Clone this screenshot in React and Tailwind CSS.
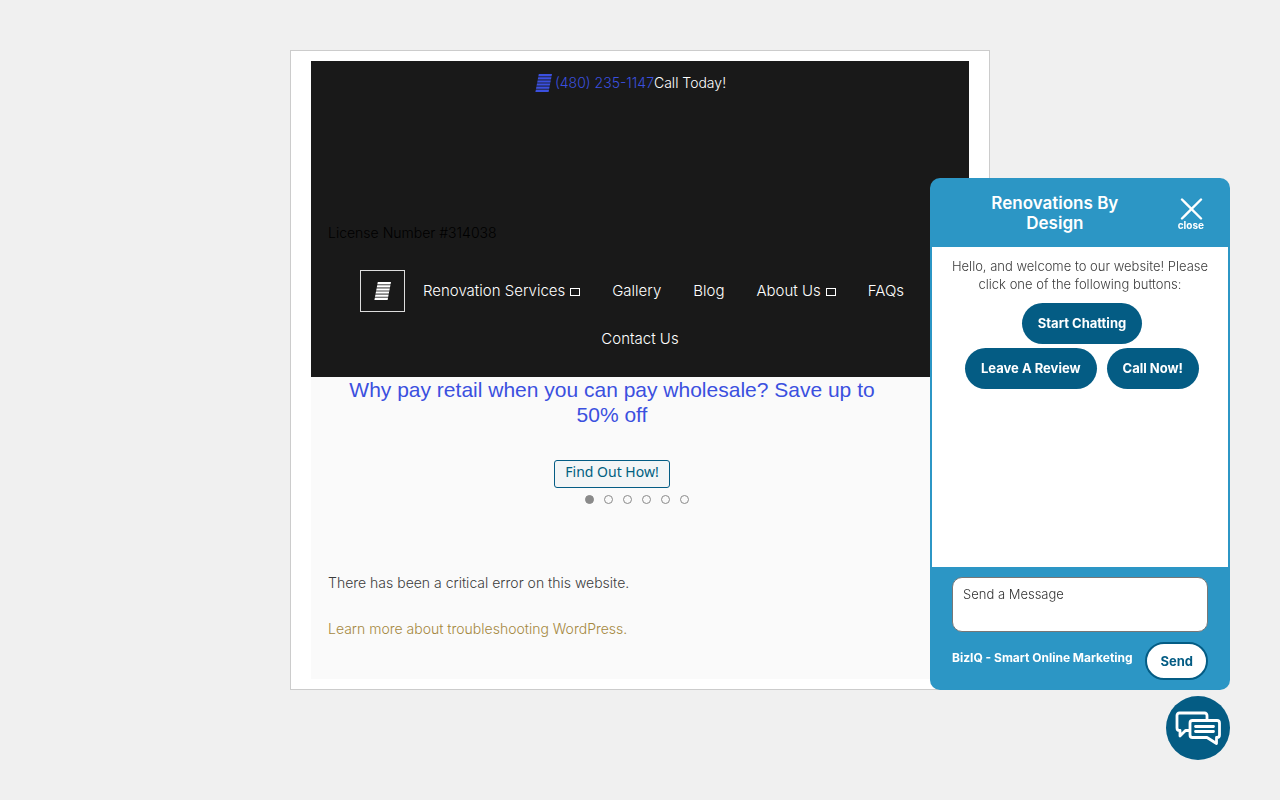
import React, { useState } from "react";

const slides = [0, 1, 2, 3, 4, 5];

const StripeIcon = ({ className }) => (
  <svg className={className} width="17" height="18" viewBox="0 0 17 18" fill="currentColor" aria-hidden="true">
    <path d="M3.8 0H17l-.4 2H3.400zM3.200 3.200h13.200l-.4 2H2.800zM2.600 6.400h13.200l-.4 2H2.200zM2 9.600h13.200l-.4 2H1.600zM1.400 12.800h13.200l-.4 2H1zM.8 16H14l-.4 2H.4z" />
    <path opacity=".4" d="M3.400 2h13.200l-.2 1.200H3.200zM2.800 5.200H16l-.2 1.200H2.600zM2.200 8.400h13.200l-.2 1.200H2zM1.600 11.600h13.200l-.2 1.200H1.400zM1 14.800h13.200L14 16H.8z" />
  </svg>
);

const NavLink = ({ children, hasMenu }) => (
  <a href="#" className="flex h-12 items-center px-4 text-[15px] text-white">
    {children}
    {hasMenu && <span className="ml-[5px] mt-0.5 h-2 w-[10px] border border-white" />}
  </a>
);

const ChatButton = ({ children }) => (
  <button type="button" className="h-[41px] rounded-full bg-[#045c84] px-4 text-[13px] font-bold text-white">
    {children}
  </button>
);

const ChatWidget = ({ onClose }) => {
  const [message, setMessage] = useState("");

  return (
    <section className="fixed right-[50px] bottom-[110px] flex h-[512px] w-[300px] flex-col rounded-[10px] bg-[#2c96c5] px-0.5">
      <header className="flex h-[69px] items-center pr-6">
        <h2 className="flex-1 px-12 text-center text-[17px] leading-5 font-semibold text-white">
          Renovations By Design
        </h2>
        <button type="button" onClick={onClose} className="flex flex-col items-center pt-[3px] text-[10px] leading-[10px] font-bold text-white">
          <svg width="24" height="22" viewBox="0 0 24 22" fill="none" stroke="currentColor" strokeWidth="2.4" strokeLinecap="round" aria-hidden="true">
            <path d="M3 1.500l19 19M22 1.500L3 20.500" />
          </svg>
          close
        </button>
      </header>
      <div className="flex-1 bg-white px-4 pt-[10px] text-center">
        <p className="text-[13px] leading-[18px]">
          Hello, and welcome to our website! Please click one of the following buttons:
        </p>
        <div className="mt-[10px] flex flex-wrap justify-center gap-x-[10px] gap-y-1 pr-2 pl-3">
          <ChatButton>Start Chatting</ChatButton>
          <ChatButton>Leave A Review</ChatButton>
          <ChatButton>Call Now!</ChatButton>
        </div>
      </div>
      <form className="px-5 pt-[10px] pb-[10px]" onSubmit={(e) => e.preventDefault()}>
        <textarea
          aria-label="Send a Message"
          placeholder="Send a Message"
          value={message}
          onChange={(e) => setMessage(e.target.value)}
          className="block h-[55px] w-full resize-none rounded-[10px] border border-[#777] bg-white px-[10px] py-[7px] text-[13px] leading-[18px] text-[#333] placeholder:text-[#333]"
        />
        <div className="mt-[10px] flex items-center justify-between">
          <a href="#" className="mb-[6px] text-[12px] font-bold whitespace-nowrap text-white">
            BizIQ - Smart Online Marketing
          </a>
          <button type="submit" className="h-[38px] rounded-full border-2 border-[#045c84] bg-white px-[13px] text-[13px] font-bold text-[#045c84]">
            Send
          </button>
        </div>
      </form>
    </section>
  );
};

const App = () => {
  const [chatOpen, setChatOpen] = useState(true);
  const [active, setActive] = useState(0);

  return (
    <div className="min-h-screen bg-[#f0f0f0] px-4 py-[50px] font-[Inter,sans-serif] text-sm font-[350] text-[#3c3c3c]">
      <main className="mx-auto max-w-[700px] border border-[#ccc] bg-white px-5 py-[10px]">
        <header className="bg-[#191919] pb-[14px]">
          <p className="flex items-center justify-center pt-3 pr-[19px] text-white">
            <a href="#" className="flex items-center text-[#3b50df]">
              <StripeIcon className="mr-[3px]" />
              (480) 235-1147
            </a>
            Call Today!
          </p>
          <p className="mt-[130px] px-[17px] text-black">License Number #314038</p>
          <nav className="mt-6 flex flex-wrap items-center justify-center px-8">
            <button type="button" aria-label="Menu" className="mr-[2px] flex h-[42px] w-[45px] items-center justify-center border border-[#ddd] text-white">
              <StripeIcon />
            </button>
            <NavLink hasMenu>Renovation Services</NavLink>
            <NavLink>Gallery</NavLink>
            <NavLink>Blog</NavLink>
            <NavLink hasMenu>About Us</NavLink>
            <NavLink>FAQs</NavLink>
            <NavLink>Contact Us</NavLink>
          </nav>
        </header>

        <div className="bg-[#fafafa] pb-10">
          <div className="mr-14 flex flex-col items-center px-8 text-center">
            <h1 className="font-['Liberation_Sans',sans-serif] text-[21px] leading-[25px] font-normal text-[#3b50df]">
              Why pay retail when you can pay wholesale? Save up to 50% off
            </h1>
            <a href="#" className="mt-[33px] h-7 rounded-[3px] border border-[#045c84] bg-[#f3f5f6] px-[10px] font-['Noto_Sans',sans-serif] text-sm leading-[22px] font-normal text-[#006080]">
              Find Out How!
            </a>
          </div>
          <div className="mt-[7px] flex justify-center gap-[10px] pr-[7px]">
            {slides.map((i) => (
              <button
                key={i}
                type="button"
                aria-label={`Slide ${i + 1}`}
                onClick={() => setActive(i)}
                className={`size-[9px] rounded-full border border-[#8a8a8a] ${i === active ? "bg-[#8a8a8a]" : ""}`}
              />
            ))}
          </div>
          <div className="mt-[69px] space-y-[26px] px-[17px]">
            <p>There has been a critical error on this website.</p>
            <p>
              <a href="#" className="text-[#a58840]">Learn more about troubleshooting WordPress.</a>
            </p>
          </div>
        </div>
      </main>

      {chatOpen && <ChatWidget onClose={() => setChatOpen(false)} />}

      <button
        type="button"
        aria-label="Toggle chat"
        onClick={() => setChatOpen(!chatOpen)}
        className="fixed right-[50px] bottom-10 flex size-16 items-center justify-center rounded-full bg-[#045c84] text-white"
      >
        <svg width="46" height="34" viewBox="0 0 46 34" fill="none" stroke="currentColor" strokeWidth="2.8" strokeLinejoin="round" strokeLinecap="round" aria-hidden="true">
          <path d="M32 8V4.500Q32 2 29.500 2H4.500Q2 2 2 4.500V17Q2 19.500 4.500 19.500H5V25L10.500 19.500H14" />
          <path d="M17.500 9.500H42Q44.500 9.500 44.500 12V24Q44.500 26.500 42 26.500H41.500V32.500L32 26.500H17.500Q15 26.500 15 24V12Q15 9.500 17.500 9.500z" />
          <path d="M20.500 15.500H38.500M20.500 20.500H38.500" />
        </svg>
      </button>
    </div>
  );
};

export default App;
